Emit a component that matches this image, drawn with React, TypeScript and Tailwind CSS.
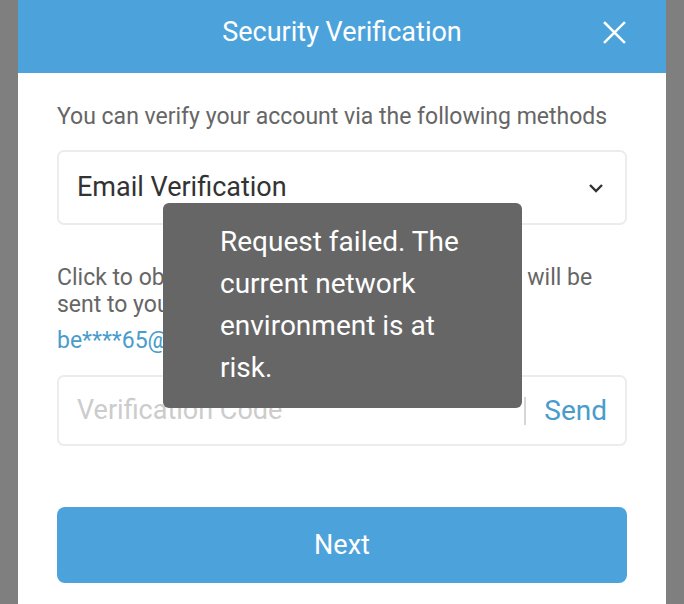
import React from 'react';

export default function App() {
    return (
        <div className="w-[684px] h-[604px] bg-[#7f7f7f] overflow-hidden relative" style={{ fontFamily: 'Roboto, "Noto Sans", sans-serif' }}>
            <div className="ml-[18px] w-[648px] h-[640px] bg-white">
                {/* Header */}
                <div className="h-[73px] bg-[#4ca3dc] flex items-center justify-center relative pb-[8px]">
                    <span className="text-white text-[27px] leading-none">Security Verification</span>
                    <svg className="absolute left-[585px] top-[21px]" width="23" height="23" viewBox="0 0 24 24" fill="none" stroke="white" strokeWidth="2.6" strokeLinecap="square">
                        <path d="M2 2 L22 22 M22 2 L2 22" />
                    </svg>
                </div>

                <div className="px-[39px] pt-[29px]">
                    <p className="text-[23px] leading-[30px] text-[#666666]">You can verify your account via the following methods</p>

                    <div className="mt-[18px] h-[75px] border-2 border-[#ececec] rounded-[7px] flex items-center justify-between pl-[18px] pr-[20px]">
                        <span className="text-[27px] text-[#333333]">Email Verification</span>
                        <svg width="18" height="12" viewBox="0 0 18 12" fill="none" stroke="#333333" strokeWidth="2.4">
                            <path d="M3 3 L9 9 L15 3" />
                        </svg>
                    </div>

                    <p className="mt-[39px] text-[23px] leading-[27px] text-[#666666]">Click to obtain the verification code. The code will be sent to your email address.</p>
                    <p className="mt-[5px] text-[23px] leading-[35px] text-[#4a9ccc]">be****65@gmail.com</p>

                    <div className="mt-[17px] h-[71px] border-2 border-[#ececec] rounded-[7px] flex items-center pl-[18px] pr-[18px]">
                        <span className="flex-1 text-[27px] text-[#cccccc]">Verification Code</span>
                        <div className="w-[2px] h-[28px] bg-[#d6d6d6] mr-[18px]"></div>
                        <span className="text-[28px] text-[#4a9ccc]">Send</span>
                    </div>

                    <button className="mt-[61px] w-full h-[76px] rounded-[8px] bg-[#4ca3dc] text-white text-[27px]">Next</button>
                </div>
            </div>

            {/* Toast */}
            <div className="absolute left-[163px] top-[203px] w-[359px] h-[205px] rounded-[6px] bg-[#666666] pl-[57px] pt-[18px]">
                <p className="text-white text-[28px] leading-[42px]">
                    Request failed. The<br />current network<br />environment is at<br />risk.
                </p>
            </div>
        </div>
    );
}
